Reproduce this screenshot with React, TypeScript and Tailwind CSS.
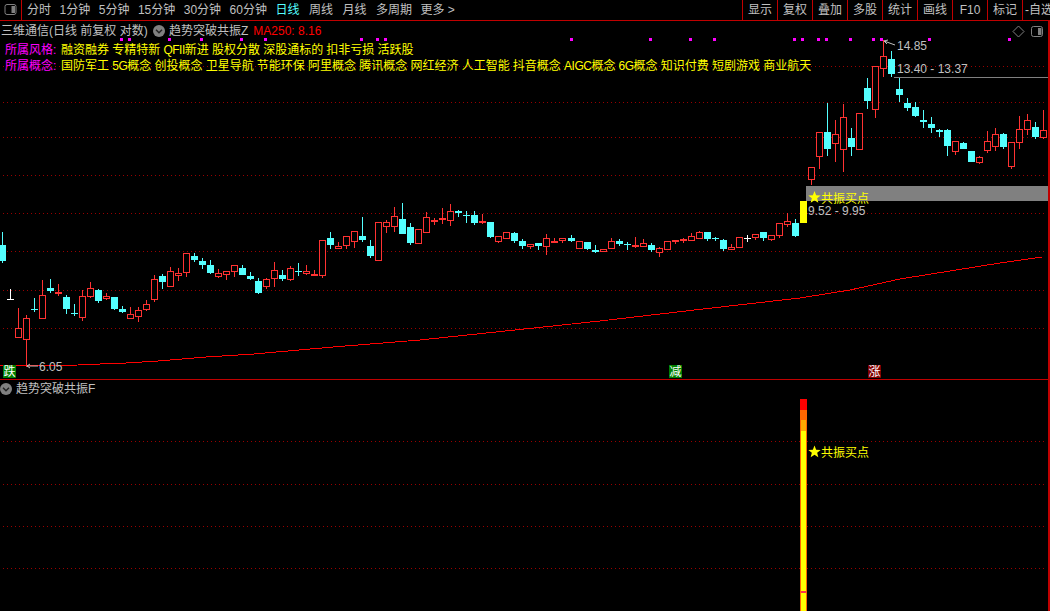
import React from 'react';

type Candle = [number, number, number, number, string];

// high, body top, body bottom, low, colour
const candles: Candle[] = [
  [232, 245, 261, 263, 'c'], [289, 299, 300, 300, 'w'], [308, 328, 338, 338, 'r'], [315, 318, 340, 367, 'r'],
  [298, 309, 310, 312, 'c'], [280, 295, 319, 319, 'r'], [279, 288, 291, 293, 'c'], [284, 292, 294, 296, 'r'],
  [295, 297, 309, 314, 'c'], [304, 313, 314, 316, 'c'], [290, 296, 318, 321, 'r'], [282, 288, 297, 298, 'r'],
  [289, 290, 301, 303, 'c'], [293, 296, 299, 300, 'r'], [297, 297, 309, 310, 'c'], [306, 309, 312, 313, 'c'],
  [307, 314, 319, 319, 'r'], [307, 310, 317, 322, 'r'], [300, 304, 310, 311, 'r'], [275, 279, 300, 302, 'r'],
  [274, 276, 282, 289, 'c'], [267, 271, 287, 287, 'r'], [268, 273, 276, 281, 'r'], [253, 253, 273, 277, 'r'],
  [253, 256, 260, 262, 'c'], [258, 261, 265, 269, 'c'], [260, 265, 273, 274, 'c'], [269, 273, 277, 278, 'r'],
  [271, 271, 275, 280, 'r'], [265, 265, 272, 277, 'r'], [265, 268, 275, 275, 'c'], [272, 276, 279, 280, 'c'],
  [278, 281, 293, 294, 'c'], [278, 279, 287, 289, 'r'], [262, 270, 279, 287, 'r'], [270, 275, 279, 281, 'c'],
  [266, 268, 280, 281, 'r'], [263, 271, 272, 276, 'c'], [265, 271, 274, 275, 'r'], [270, 274, 276, 276, 'r'],
  [240, 240, 276, 278, 'r'], [232, 238, 245, 249, 'c'], [242, 246, 249, 249, 'r'], [236, 236, 246, 249, 'r'],
  [231, 231, 242, 248, 'r'], [217, 236, 240, 242, 'c'], [240, 246, 256, 258, 'c'], [222, 222, 261, 261, 'r'],
  [220, 222, 227, 233, 'r'], [207, 216, 227, 232, 'r'], [203, 219, 234, 234, 'c'], [223, 227, 243, 245, 'c'],
  [229, 229, 244, 244, 'r'], [212, 217, 233, 233, 'r'], [218, 220, 222, 225, 'r'], [208, 218, 220, 224, 'r'],
  [204, 211, 221, 226, 'r'], [210, 211, 213, 217, 'c'], [211, 215, 216, 223, 'c'], [211, 215, 223, 225, 'c'],
  [214, 221, 223, 224, 'r'], [222, 222, 237, 238, 'c'], [236, 236, 242, 243, 'r'], [232, 232, 239, 239, 'r'],
  [232, 233, 241, 243, 'c'], [239, 241, 246, 249, 'c'], [244, 244, 247, 249, 'r'], [243, 243, 246, 250, 'c'],
  [234, 238, 247, 255, 'r'], [238, 241, 243, 243, 'r'], [238, 238, 241, 243, 'r'], [235, 238, 241, 242, 'c'],
  [241, 241, 249, 249, 'r'], [242, 242, 249, 250, 'c'], [245, 250, 252, 253, 'c'], [249, 249, 252, 252, 'r'],
  [238, 241, 249, 249, 'r'], [239, 241, 244, 246, 'c'], [242, 244, 245, 250, 'c'], [237, 245, 247, 248, 'r'],
  [239, 243, 247, 247, 'r'], [243, 245, 250, 252, 'c'], [247, 248, 253, 257, 'r'], [241, 241, 250, 250, 'r'],
  [240, 240, 242, 244, 'r'], [238, 239, 241, 243, 'r'], [233, 236, 241, 241, 'r'], [231, 232, 239, 239, 'r'],
  [232, 232, 239, 241, 'c'], [237, 238, 239, 241, 'c'], [239, 240, 249, 251, 'c'], [244, 247, 250, 250, 'r'],
  [237, 237, 248, 248, 'r'], [235, 238, 239, 242, 'w'], [234, 234, 238, 240, 'r'], [232, 232, 238, 241, 'c'],
  [235, 235, 240, 241, 'r'], [223, 223, 236, 238, 'r'], [213, 221, 225, 227, 'r'], [219, 223, 236, 237, 'c'],
  [201, 201, 223, 223, 'y'], [167, 167, 180, 185, 'r'], [132, 132, 157, 169, 'r'], [103, 132, 149, 156, 'c'],
  [120, 134, 144, 162, 'r'], [104, 117, 150, 172, 'r'], [128, 138, 147, 156, 'c'], [113, 113, 150, 150, 'r'],
  [78, 88, 101, 109, 'c'], [66, 66, 110, 118, 'r'], [40, 56, 69, 77, 'r'], [51, 59, 74, 77, 'c'],
  [78, 89, 95, 102, 'c'], [98, 103, 108, 111, 'c'], [102, 107, 116, 117, 'c'], [110, 120, 122, 128, 'c'],
  [117, 124, 128, 133, 'c'], [129, 130, 132, 137, 'c'], [129, 130, 146, 156, 'c'], [141, 141, 152, 155, 'r'],
  [142, 143, 149, 149, 'c'], [151, 151, 162, 162, 'c'], [156, 157, 163, 164, 'r'], [131, 141, 151, 153, 'r'],
  [128, 134, 147, 151, 'r'], [133, 134, 147, 149, 'c'], [142, 142, 167, 169, 'r'], [116, 129, 143, 149, 'r'],
  [114, 120, 130, 135, 'r'], [122, 127, 137, 139, 'c'], [110, 130, 138, 139, 'r'],
];

const candleColors: Record<string, string> = { r: '#ff3232', c: '#54ffff', w: '#ffffff', y: '#ffff00' };

const maLine =
  '0,366 78,365 100,364 126,363 158,361 206,357 254,354 333,347 420,340 600,321 703,309 800,298 850,290 900,279 950,271 1000,263 1042,257';

const markers = [120, 128, 168, 200, 240, 264, 360, 376, 384, 570, 649, 689, 713, 793, 801, 817, 825, 849, 872, 880, 928, 1008];

const upperGrid = [66, 102, 137, 175, 213, 251, 290, 328];
const lowerGrid = [441, 484, 526, 568];

const leftTabs = ['1分钟', '5分钟', '15分钟', '30分钟', '60分钟'];
const rightTabs = ['显示', '复权', '叠加', '多股', '统计', '画线', 'F10', '标记'];
const styles = ['融资融券', '专精特新', 'QFII新进', '股权分散', '深股通标的', '扣非亏损', '活跃股'];
const concepts = ['国防军工', '5G概念', '创投概念', '卫星导航', '节能环保', '阿里概念', '腾讯概念', '网红经济', '人工智能', '抖音概念', 'AIGC概念', '6G概念', '知识付费', '短剧游戏', '商业航天'];

function candleX(i: number) {
  return Math.floor(2.3 + 8.01 * i);
}

function CandleMark({ data, index }: { data: Candle; index: number }) {
  const [high, top, bottom, low, kind] = data;
  const x = candleX(index);
  const color = candleColors[kind];
  if (kind === 'r' && bottom - top > 2) {
    return (
      <g>
        <rect x={x} y={high} width={1} height={Math.max(top - high, 0)} fill={color} />
        <rect x={x} y={bottom} width={1} height={Math.max(low - bottom, 0)} fill={color} />
        <rect x={x - 2.5} y={top + 0.5} width={6} height={bottom - top - 1} fill="#000" stroke={color} />
      </g>
    );
  }
  return (
    <g>
      <rect x={x} y={high} width={1} height={Math.max(low - high, 1)} fill={color} />
      <rect x={x - 3} y={top} width={7} height={Math.max(bottom - top, 1)} fill={color} />
    </g>
  );
}

function GridDots({ rows }: { rows: number[] }) {
  return (
    <>
      {rows.map((y) => (
        <line key={y} x1={3} x2={1046} y1={y + 0.5} y2={y + 0.5} stroke="#990000" strokeDasharray="1 3" />
      ))}
    </>
  );
}

function Star({ cx, cy }: { cx: number; cy: number }) {
  const pts = [];
  for (let i = 0; i < 10; i++) {
    const r = i % 2 === 0 ? 6.5 : 2.8;
    const a = (Math.PI / 5) * i - Math.PI / 2;
    pts.push(`${cx + r * Math.cos(a)},${cy + r * Math.sin(a)}`);
  }
  return <polygon points={pts.join(' ')} fill="#ffff00" />;
}

function Badge({ text, color }: { text: string; color: string }) {
  return (
    <div className={`flex h-[13px] w-[13px] items-center justify-center text-[12px] leading-none text-white ${color}`}>
      {text}
    </div>
  );
}

function RoundChevron() {
  return (
    <svg width="12" height="12" viewBox="0 0 12 12" className="shrink-0">
      <circle cx="6" cy="6" r="6" fill="#808080" />
      <path d="M3 4.8 L6 7.8 L9 4.8" fill="none" stroke="#222" strokeWidth="1.4" />
    </svg>
  );
}

function PanelIcon({ className }: { className?: string }) {
  return (
    <svg width="12" height="11" viewBox="0 0 12 11" className={className}>
      <rect x="0.5" y="0.5" width="11" height="10" rx="2" fill="none" stroke="#808080" />
      <rect x="7" y="2" width="3.5" height="7" fill="#808080" />
    </svg>
  );
}

function Toolbar() {
  return (
    <div className="flex h-[21px] shrink-0 items-center overflow-hidden border-b border-[#c00000] text-[#c0c0c0]">
      <div className="flex h-full w-[22px] shrink-0 items-center justify-center border-r border-[#c00000] pb-[1px]">
        <PanelIcon className="h-[11px] w-[13px]" />
      </div>
      <div className="ml-[5px] flex items-center gap-[8.5px] whitespace-nowrap">
        <span>分时</span>
        {leftTabs.map((t) => (
          <span key={t}>{t}</span>
        ))}
        <span className="text-[#54ffff]">日线</span>
        <span className="ml-[1px]">周线</span>
        <span className="ml-[1px]">月线</span>
        <span className="ml-[1px]">多周期</span>
        <span>更多 &gt;</span>
      </div>
      <div className="ml-auto flex h-full w-[308px] shrink-0">
        {rightTabs.map((t) => (
          <div key={t} className="flex h-full w-[35px] shrink-0 items-center justify-center border-l border-[#c00000]">
            {t}
          </div>
        ))}
        <div className="flex h-full flex-1 items-center whitespace-nowrap border-l border-[#c00000] pl-[2px]">-自选</div>
      </div>
    </div>
  );
}

function Tag({ text }: { text: string }) {
  // latin prefix runs a bit tighter than the bitmap font it stands in for
  const latin = text.match(/^[A-Za-z0-9]+/)?.[0] ?? '';
  return (
    <span>
      {latin && <span className="tracking-[-0.5px]">{latin}</span>}
      {text.slice(latin.length)}
    </span>
  );
}

function TagRow({ label, tags }: { label: string; tags: string[] }) {
  return (
    <div className="flex h-[16px] items-center whitespace-nowrap pl-[5px]">
      <span className="w-[56px] text-[#ff00ff]">{label}</span>
      <div className="flex gap-[3.2px] text-[#ffff00]">
        {tags.map((t) => (
          <Tag key={t} text={t} />
        ))}
      </div>
    </div>
  );
}

function UpperPanel() {
  return (
    <div className="relative h-[359px] shrink-0 overflow-hidden border-b border-r-2 border-[#c00000]">
      <svg className="absolute inset-0 h-[358px] w-[1048px]" viewBox="0 21 1048 358" shapeRendering="crispEdges">
        <GridDots rows={upperGrid} />
        {markers.map((x) => (
          <rect key={x} x={x} y={38} width={3} height={3} fill="#ff00ff" />
        ))}
        <polyline points={maLine} fill="none" stroke="#ff0000" />
        {candles.map((c, i) => (
          <CandleMark key={i} data={c} index={i} />
        ))}
        <rect x={806} y={186} width={242} height={15} fill="#808080" />
        <rect x={894} y={77} width={154} height={1} fill="#808080" />
        <g shapeRendering="geometricPrecision" fontSize="12" fill="#c0c0c0">
          <Star cx={814.5} cy={197.5} />
          <text x={821} y={203} fill="#ffff00">共振买点</text>
          <text x={808} y={215}>9.52 - 9.95</text>
          <text x={897} y={50}>14.85</text>
          <text x={897} y={73}>13.40 - 13.37</text>
          <text x={39} y={371}>6.05</text>
          <path d="M884 41 L895 45 M884 41 L888 40 M884 41 L887 44" stroke="#c0c0c0" fill="none" />
          <path d="M27 366 L38 366 M27 366 L30 364 M27 366 L30 368" stroke="#c0c0c0" fill="none" />
          <path d="M1018.5 26 L1024 31.5 L1018.5 37 L1013 31.5 Z" stroke="#808080" fill="none" />
        </g>
      </svg>
      <PanelIcon className="absolute left-[1031px] top-[5px]" />
      <div className="absolute left-[3px] top-[344px]"><Badge text="跌" color="bg-[#007f00]" /></div>
      <div className="absolute left-[669px] top-[344px]"><Badge text="减" color="bg-[#007f00]" /></div>
      <div className="absolute left-[868px] top-[344px]"><Badge text="涨" color="bg-[#800000]" /></div>

      <div className="relative">
        <div className="flex h-[19px] items-center whitespace-nowrap pl-[1px] text-[#c0c0c0]">
          <span className="w-[149px]">三维通信(日线 前复权 对数)</span>
          <span className="ml-[3px]"><RoundChevron /></span>
          <span className="ml-[4px]">趋势突破共振Z</span>
          <span className="ml-[5px] text-[#ff0000]">MA250: 8.16</span>
        </div>
        <div className="mt-[2px]">
          <TagRow label="所属风格:" tags={styles} />
          <TagRow label="所属概念:" tags={concepts} />
        </div>
      </div>
    </div>
  );
}

function LowerPanel() {
  return (
    <div className="relative flex-1 overflow-hidden border-r-2 border-[#c00000]">
      <svg className="absolute inset-0 h-[231px] w-[1048px]" viewBox="0 380 1048 231" shapeRendering="crispEdges">
        <GridDots rows={lowerGrid} />
        <rect x={800} y={399} width={7} height={11} fill="#ff0000" />
        <rect x={800} y={410} width={7} height={201} fill="#ff6600" />
        <rect x={801} y={420} width={5} height={11} fill="#ffaa00" />
        <rect x={801} y={431} width={5} height={180} fill="#ffff00" />
        <rect x={801} y={591} width={5} height={2} fill="#ff3050" />
        <g shapeRendering="geometricPrecision">
          <Star cx={814.5} cy={452} />
          <text x={821} y={457} fontSize="12" fill="#ffff00">共振买点</text>
        </g>
      </svg>
      <div className="relative flex h-[15px] items-center gap-[4px] pt-[2px] text-[#c0c0c0]">
        <RoundChevron />
        <span>趋势突破共振F</span>
      </div>
    </div>
  );
}

export default function App() {
  return (
    <div className="flex h-[611px] w-[1050px] flex-col overflow-hidden bg-black font-['Liberation_Sans','Noto_Sans_CJK_SC',sans-serif] text-[12px] leading-none">
      <Toolbar />
      <UpperPanel />
      <LowerPanel />
    </div>
  );
}
